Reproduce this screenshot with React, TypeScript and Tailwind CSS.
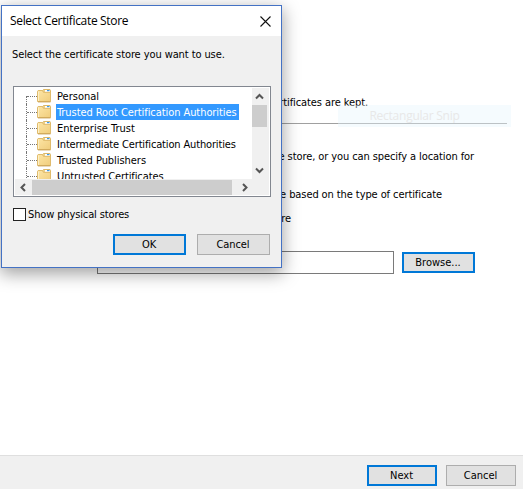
import React from "react";

const stores = [
  { name: "Personal", tracking: "tracking-normal" },
  { name: "Trusted Root Certification Authorities", tracking: "tracking-[-0.07px]" },
  { name: "Enterprise Trust", tracking: "tracking-normal" },
  { name: "Intermediate Certification Authorities", tracking: "tracking-[-0.15px]" },
  { name: "Trusted Publishers", tracking: "tracking-[-0.05px]" },
  { name: "Untrusted Certificates", tracking: "tracking-[-0.11px]" },
];

function FolderIcon() {
  return (
    <svg width="15" height="14" viewBox="0 0 15 14" className="block shrink-0">
      <defs>
        <linearGradient id="folder" x1="0" y1="0" x2="1" y2="1">
          <stop offset="0" stopColor="#fde6a6" />
          <stop offset="1" stopColor="#f0cd7c" />
        </linearGradient>
      </defs>
      <path d="M5.5 4V1.5L6.5.5H13l.5 1V4" fill="#ecd08a" stroke="#dcb868" />
      <path d="M8 1h5v2H8z" fill="#fff" />
      <path d="M10 1h2.5v1.2H10z" fill="#3d9bea" />
      <path d="M.5 12.5V2.2l.6-.7h4.4l.9 1.8H13.500v9.200z" fill="url(#folder)" stroke="#e0bb6c" />
      <path d="M1 12.900h12.500" stroke="#c9a254" />
      <path d="M1.500 2.500v9.500" stroke="#fdf0c8" />
    </svg>
  );
}

type ChevronProps = { d: string };
function Chevron({ d }: ChevronProps) {
  return (
    <svg width="9" height="9" viewBox="0 0 9 9" className="block">
      <path d={d} fill="none" stroke="#555" strokeWidth="2" />
    </svg>
  );
}

type ButtonProps = { label: string; primary?: boolean; width: string };
function Button({ label, primary, width }: ButtonProps) {
  return (
    <button
      className={`${width} flex shrink-0 items-center justify-center bg-[#e1e1e1] pt-px pr-px ${
        primary ? "border-2 border-[#0078d7]" : "border border-[#adadad]"
      }`}
    >
      {label}
    </button>
  );
}

function StoreDialog() {
  return (
    <div className="absolute top-[5px] left-px flex h-[263px] w-[281px] flex-col border border-[#4472c4] bg-[#f0f0f0] shadow-[0_5px_16px_1px_rgba(0,0,0,0.36)]">
      <div className="flex h-[30px] shrink-0 items-center justify-between bg-white pr-[10px] pl-2">
        <span className="font-['Open_Sans',sans-serif] text-[12px] tracking-[-0.33px]">Select Certificate Store</span>
        <svg width="11" height="11" viewBox="0 0 11 11">
          <path d="M.5.5l10 10M10.5.5l-10 10" stroke="#111" strokeWidth="1.1" />
        </svg>
      </div>
      <div className="mt-[10px] ml-[10px] h-4 pt-px leading-4">Select the certificate store you want to use.</div>
      <div className="mt-6 ml-[11px] flex h-[111px] w-[258px] shrink-0 flex-col border border-[#828790] bg-white p-px">
        <div className="flex h-[91px] shrink-0">
          <div className="flex-1 overflow-hidden pl-[11px]">
            {stores.map(({ name, tracking }, i) => (
              <div key={name} className="flex h-4 items-center">
                <div
                  className={`w-[11px] self-stretch border-l border-dotted border-[#777] ${i === 0 ? "mt-2" : ""}`}
                >
                  <div className={`h-0 border-t border-dotted border-[#777] ${i === 0 ? "" : "mt-2"}`} />
                </div>
                <FolderIcon />
                <span
                  className={`ml-1 h-4 pt-px pl-px leading-4 whitespace-nowrap ${tracking} ${
                    i === 1 ? "w-[183px] bg-[#3399ff] text-white" : ""
                  }`}
                >
                  {name}
                </span>
              </div>
            ))}
          </div>
          <div className="flex w-[15px] shrink-0 flex-col items-center justify-between bg-[#f0f0f0]">
            <div className="flex h-[17px] items-center">
              <Chevron d="M1 6.500l3.500-3.500L8 6.500" />
            </div>
            <div className="h-[22px] w-[15px] bg-[#cdcdcd]" />
            <div className="flex flex-1 items-end pb-[4px]">
              <Chevron d="M1 2.500L4.500 6 8 2.500" />
            </div>
          </div>
          <div className="w-0.5 shrink-0 bg-[#f0f0f0]" />
        </div>
        <div className="flex h-4 items-center bg-[#f0f0f0]">
          <div className="flex w-[17px] justify-center">
            <Chevron d="M6 1L2.5 4.5 6 8" />
          </div>
          <div className="h-[15px] w-[200px] bg-[#cdcdcd]" />
          <div className="ml-2">
            <Chevron d="M3 1l3.5 3.5L3 8" />
          </div>
        </div>
      </div>
      <label className="mt-[11px] ml-[11px] flex h-[13px] items-center gap-[2px]">
        <span className="size-[13px] border border-[#222] bg-white" />
        <span className="pt-px tracking-[-0.13px]">Show physical stores</span>
      </label>
      <div className="mt-[13px] mr-[11px] flex h-[21px] justify-end gap-[11px]">
        <Button label="OK" primary width="w-[73px]" />
        <Button label="Cancel" width="w-[73px]" />
      </div>
    </div>
  );
}

export default function App() {
  return (
    <div className="relative flex h-[489px] w-[523px] flex-col overflow-hidden bg-white font-['DejaVu_Sans_Condensed','DejaVu_Sans',sans-serif] text-[11px] leading-4 tracking-[-0.09px] text-black">
      <div className="mt-[95px] mr-4 ml-[97px] box-content h-[28px] border-b border-[#a0a0a0]">
        <div className="w-[271px] text-right">certificates are kept.</div>
      </div>
      <div className="mt-[25px] w-[474px] text-right">certificate store, or you can specify a location for</div>
      <div className="mt-[22px] w-[442px] text-right">certificate store based on the type of certificate</div>
      <div className="mt-[8px] w-[291px] text-right">following store</div>
      <div className="mt-[24px] ml-[97px] flex items-center gap-2">
        <div className="h-[23px] w-[297px] border border-[#7a7a7a] bg-white" />
        <div className="flex h-[21px] tracking-normal">
          <Button label="Browse..." primary width="w-[73px]" />
        </div>
      </div>
      <div className="mt-auto flex h-[34px] border-t border-[#dfdfdf] bg-[#f0f0f0] pt-[9px] pl-[367px]">
        <div className="flex h-[21px] gap-[9px] tracking-normal">
          <Button label="Next" primary width="w-[70px]" />
          <Button label="Cancel" width="w-[70px]" />
        </div>
      </div>
      <div className="absolute top-[105px] left-[338px] flex h-[22px] w-[173px] items-center justify-center bg-[#e6f6fc]/40 pr-5 font-['Open_Sans',sans-serif] text-[12px] tracking-[-0.25px] text-[#e8e8e8]">
        Rectangular Snip
      </div>
      <StoreDialog />
    </div>
  );
}
